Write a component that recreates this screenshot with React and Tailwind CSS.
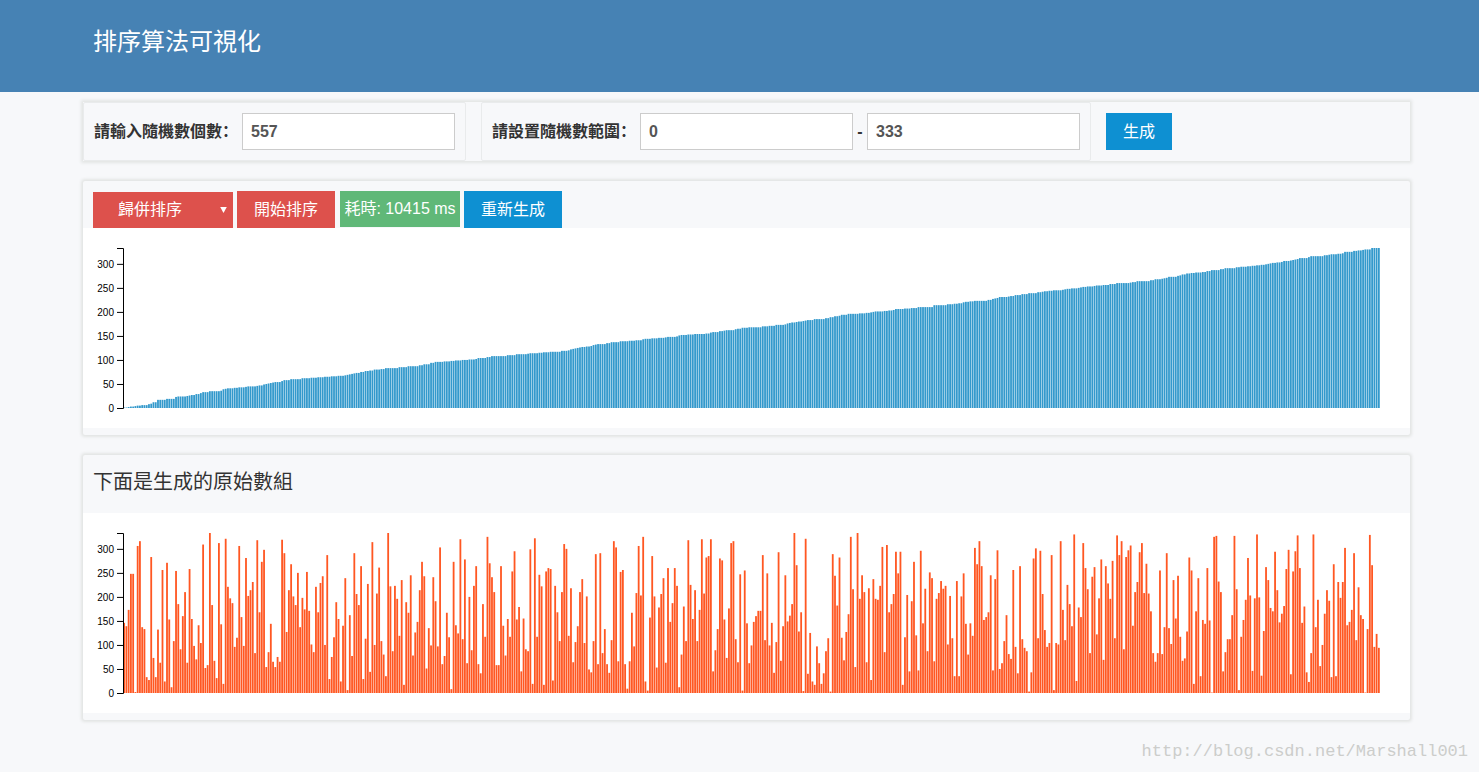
import { useState } from "react";

const RAW = [
  146, 139, 173, 248, 248, 2, 306, 316, 137, 133, 33, 27, 283, 73, 33, 132, 63, 256, 24, 271,
  153, 12, 108, 254, 185, 91, 160, 210, 63, 258, 154, 98, 70, 141, 104, 309, 52, 58, 333, 183,
  67, 31, 312, 143, 19, 321, 221, 197, 187, 96, 115, 306, 158, 98, 281, 202, 214, 231, 83, 318,
  168, 273, 298, 54, 85, 144, 65, 54, 75, 65, 319, 291, 127, 214, 268, 201, 183, 250, 137, 198,
  174, 252, 171, 101, 85, 221, 168, 229, 243, 100, 287, 29, 75, 116, 189, 154, 24, 140, 239, 6,
  162, 77, 291, 206, 183, 264, 29, 113, 227, 44, 314, 100, 207, 261, 108, 80, 35, 333, 222, 87,
  223, 196, 119, 235, 17, 189, 167, 245, 78, 126, 148, 214, 273, 243, 51, 135, 99, 241, 191, 97,
  303, 60, 77, 167, 116, 8, 273, 141, 124, 320, 112, 278, 62, 200, 89, 223, 264, 60, 41, 185,
  117, 325, 270, 241, 210, 58, 58, 264, 140, 78, 154, 117, 253, 295, 153, 179, 45, 155, 91, 87,
  299, 19, 322, 117, 246, 222, 17, 253, 260, 258, 26, 223, 168, 108, 210, 310, 300, 119, 218, 64,
  106, 139, 210, 237, 104, 201, 49, 43, 108, 289, 60, 291, 83, 133, 60, 42, 110, 316, 303, 66,
  252, 256, 60, 9, 66, 167, 97, 208, 306, 203, 325, 24, 5, 157, 285, 201, 53, 178, 206, 239,
  63, 260, 148, 187, 260, 223, 12, 80, 180, 108, 318, 225, 154, 214, 108, 173, 320, 207, 282, 285,
  320, 45, 89, 133, 280, 276, 153, 73, 176, 312, 316, 112, 64, 247, 5, 255, 145, 62, 99, 148,
  160, 171, 171, 287, 110, 249, 99, 146, 42, 106, 293, 67, 139, 245, 149, 161, 185, 333, 266, 128,
  168, 4, 321, 40, 125, 24, 17, 97, 62, 19, 41, 87, 114, 3, 289, 244, 182, 282, 115, 68,
  127, 164, 325, 216, 54, 333, 196, 245, 210, 64, 218, 27, 237, 196, 194, 223, 304, 85, 308, 168,
  185, 206, 294, 249, 294, 17, 116, 204, 45, 191, 273, 120, 47, 296, 145, 217, 87, 251, 239, 66,
  196, 208, 233, 217, 223, 101, 202, 114, 35, 233, 35, 201, 249, 144, 80, 145, 119, 302, 268, 316,
  264, 152, 158, 168, 245, 47, 237, 297, 50, 62, 108, 162, 81, 71, 256, 96, 41, 264, 112, 94,
  87, 3, 43, 280, 301, 114, 296, 206, 131, 96, 104, 287, 6, 104, 101, 316, 173, 110, 225, 185,
  139, 330, 25, 178, 158, 312, 260, 216, 83, 242, 262, 122, 197, 278, 69, 264, 228, 196, 275, 114,
  328, 287, 316, 91, 283, 297, 307, 140, 210, 231, 293, 312, 208, 269, 207, 170, 83, 65, 83, 255,
  81, 137, 291, 135, 102, 235, 155, 244, 117, 67, 72, 128, 282, 255, 19, 170, 239, 35, 152, 144,
  260, 151, 1, 325, 327, 232, 210, 45, 85, 112, 112, 162, 327, 216, 6, 117, 152, 194, 281, 203,
  46, 197, 330, 199, 36, 129, 262, 235, 177, 170, 294, 214, 147, 165, 181, 258, 298, 39, 253, 295,
  328, 260, 146, 180, 43, 23, 83, 330, 137, 194, 56, 100, 165, 214, 192, 33, 268, 35, 231, 198,
  231, 302, 141, 148, 173, 291, 110, 220, 162, 154, 1, 133, 329, 266, 96, 123, 94,
];

const SORTED = [...RAW].sort((a, b) => a - b);
const TICKS = [0, 50, 100, 150, 200, 250, 300];
const MAX = 333;
const PLOT_HEIGHT = 160;

function BarChart({ data, color, label }) {
  return (
    <div className="flex bg-white py-5 pr-[30px]">
      {/* Axis */}
      <svg className="relative h-[160px] w-10 shrink-0 overflow-visible">
        <g transform="translate(40,0)">
          <path d={`M-6,0.5H0.5V${PLOT_HEIGHT + 0.5}H-6`} fill="none" stroke="#000" />
          {TICKS.map((t) => (
            <g key={t} transform={`translate(0,${PLOT_HEIGHT - (t / MAX) * PLOT_HEIGHT})`}>
              <line x1="-6" x2="0" y1="0.5" y2="0.5" stroke="#000" />
              <text
                x="-9"
                y="0.5"
                dy="0.32em"
                textAnchor="end"
                className="fill-black font-['Liberation_Sans',sans-serif] text-[10px]"
              >
                {t}
              </text>
            </g>
          ))}
        </g>
      </svg>
      {/* Bars */}
      <svg
        className="h-[160px] min-w-0 flex-1"
        viewBox={`0 0 ${data.length} ${MAX}`}
        preserveAspectRatio="none"
        role="img"
        aria-label={label}
      >
        {data.map((v, i) => (
          <rect key={i} x={i + 0.1} y={MAX - v} width="0.8" height={v} fill={color} />
        ))}
      </svg>
    </div>
  );
}

function Panel({ children }) {
  return (
    <section className="mb-5 rounded-xs bg-[#f7f8fa] pb-[7px] shadow-[0_0_3px_2px_#e3e5e4]">
      {children}
    </section>
  );
}

const inputClass =
  "h-[37px] w-[213px] border border-[#ccc] bg-white px-2 text-base font-bold text-[#555] outline-none";

export default function App() {
  const [count, setCount] = useState("557");
  const [min, setMin] = useState("0");
  const [max, setMax] = useState("333");
  const [algorithm, setAlgorithm] = useState("merge");

  return (
    <div className="min-h-screen bg-[#f7f8fa] font-['Liberation_Sans','Noto_Sans_CJK_SC',sans-serif] text-base text-[#333]">
      <header className="h-[92px] bg-[#4682b4] pt-6 pl-[93px]">
        <h1 className="text-2xl leading-9 text-white">排序算法可視化</h1>
      </header>

      <main className="pt-[10px] pr-[69px] pl-[83px]">
        {/* Settings */}
        <form
          className="mb-5 flex items-center gap-[15px] shadow-[0_0_3px_2px_#e3e5e4]"
          onSubmit={(e) => e.preventDefault()}
        >
          <div className="flex items-center gap-1 rounded-xs border border-[#e9ebec] p-[10px]">
            <label htmlFor="count" className="font-bold whitespace-nowrap">請輸入隨機數個數：</label>
            <input id="count" className={inputClass} value={count} onChange={(e) => setCount(e.target.value)} />
          </div>
          <div className="flex items-center gap-1 rounded-xs border border-[#e9ebec] p-[10px]">
            <label htmlFor="min" className="font-bold whitespace-nowrap">請設置隨機數範圍：</label>
            <input id="min" className={inputClass} value={min} onChange={(e) => setMin(e.target.value)} />
            <span className="w-[6px] text-center font-bold">-</span>
            <input
              aria-label="max"
              className={inputClass}
              value={max}
              onChange={(e) => setMax(e.target.value)}
            />
          </div>
          <button type="submit" className="h-[37px] w-[66px] bg-[#0e90d2] text-white">生成</button>
        </form>

        {/* Sorted array */}
        <Panel>
          <div className="flex h-[47px] gap-1 px-[10px] pt-[10px]">
            <div className="relative self-end">
              <select
                aria-label="algorithm"
                className="block h-9 w-[140px] appearance-none bg-[#dd514c] pl-[25px] text-white outline-none"
                value={algorithm}
                onChange={(e) => setAlgorithm(e.target.value)}
              >
                <option value="merge">歸併排序</option>
                <option value="quick">快速排序</option>
                <option value="bubble">冒泡排序</option>
              </select>
              <svg className="pointer-events-none absolute top-[15px] right-[6px] h-[6px] w-[7px]" viewBox="0 0 7 6">
                <path d="M0.2 0H6.8L3.5 6Z" fill="#fff" />
              </svg>
            </div>
            <button className="h-[37px] w-[98px] bg-[#dd514c] text-white">開始排序</button>
            <span className="ml-px h-9 w-[120px] bg-[#60b878] text-center leading-9 whitespace-nowrap text-white">
              耗時: 10415 ms
            </span>
            <button className="h-[37px] w-[98px] bg-[#0e90d2] text-white">重新生成</button>
          </div>
          <BarChart data={SORTED} color="#3399cc" label="排序結果" />
        </Panel>

        {/* Original array */}
        <Panel>
          <h2 className="h-[58px] px-[10px] pt-3 text-xl leading-[30px]">下面是生成的原始數組</h2>
          <BarChart data={RAW} color="#ff5722" label="原始數組" />
        </Panel>
      </main>

      <footer className="pr-[11px] text-right font-['Liberation_Mono',monospace] text-[17px] leading-6 text-[#cccdcb]">
        http://blog.csdn.net/Marshall001
      </footer>
    </div>
  );
}
